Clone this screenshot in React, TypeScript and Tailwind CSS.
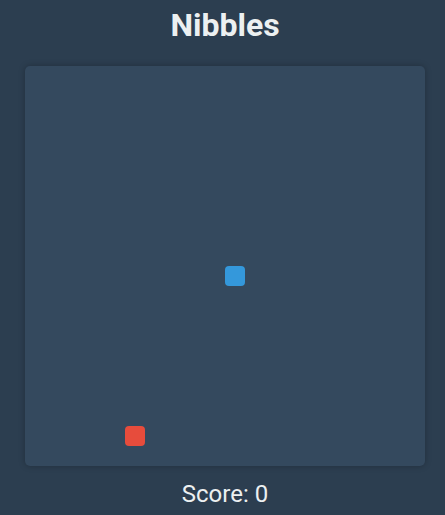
const CELL = 20

const snake = [{ x: 10, y: 10 }]
const food = { x: 5, y: 18 }

export default function App() {
  return (
    <div
      className="min-h-screen w-full bg-[#2c3e50] flex flex-col items-center pl-[5px] pt-[7px] text-[#ecf0f1]"
      style={{ fontFamily: 'Roboto, "Liberation Sans", sans-serif' }}
    >
      <h1 className="text-[32px] font-bold leading-[37px]">Nibbles</h1>

      {/* Board */}
      <div className="relative mt-[22px] w-[400px] h-[400px] rounded-[5px] bg-[#34495e] shadow-[0_0_6px_rgba(0,0,0,0.25)]">
        {snake.map((s, i) => (
          <div
            key={i}
            className="absolute w-[20px] h-[20px] rounded-[4px] bg-[#3498db]"
            style={{ left: s.x * CELL, top: s.y * CELL }}
          />
        ))}
        <div
          className="absolute w-[20px] h-[20px] rounded-[4px] bg-[#e74c3c]"
          style={{ left: food.x * CELL, top: food.y * CELL }}
        />
      </div>

      <div className="mt-[14px] text-[24px] leading-[28px]">Score: 0</div>
    </div>
  )
}
